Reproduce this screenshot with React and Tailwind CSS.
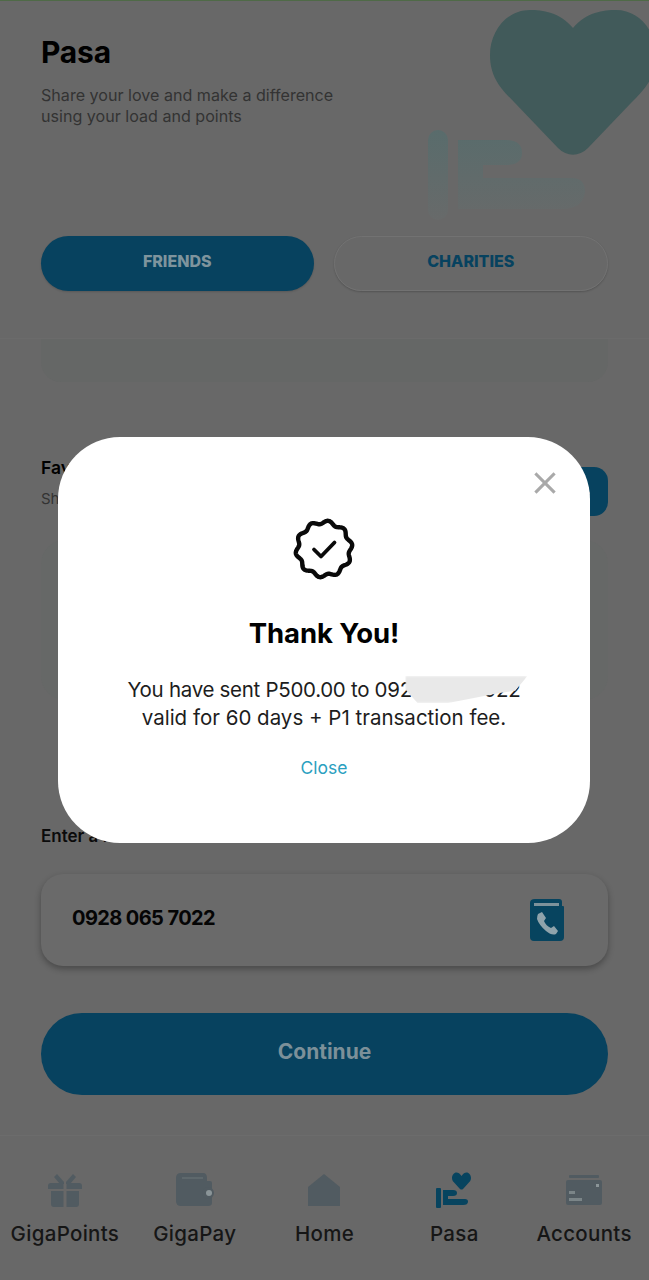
import React from 'react';
import { X } from 'lucide-react';

const font = { fontFamily: 'Inter, "Open Sans", sans-serif' };

// wavy seal outline around a 64x64 box
const sealPath = () => {
  const pts = [];
  for (let i = 0; i < 240; i++) {
    const a = (i / 240) * Math.PI * 2;
    const r = 26.8 + 1.7 * Math.cos(a * 10 + Math.PI / 2);
    pts.push(`${(32 + r * Math.cos(a)).toFixed(2)} ${(32 + r * Math.sin(a)).toFixed(2)}`);
  }
  return `M${pts.join('L')}Z`;
};

const HeaderArt = () => (
  <svg className="absolute left-[410px] top-0" width="239" height="230" viewBox="0 0 239 230">
    <defs>
      <linearGradient id="handFade" x1="0" y1="130" x2="0" y2="222" gradientUnits="userSpaceOnUse">
        <stop offset="0" stopColor="#596c6c" />
        <stop offset="1" stopColor="#686a6a" />
      </linearGradient>
    </defs>
    <path
      fill="#415a5a"
      d="M163 28C150 12 132 10 120 10C96 10 80 32 80 55C80 78 92 90 105 103L148 148C157 157 169 157 178 148L221 103C234 90 246 78 246 55C246 32 230 10 206 10C194 10 176 12 163 28Z"
    />
    <rect x="18" y="130" width="20" height="90" rx="10" fill="url(#handFade)" />
    <path
      fill="url(#handFade)"
      d="M48 140H95Q112 140 112 153Q112 165 96 165H73V178H162Q175 178 175 192Q173 209 152 209H48Z"
    />
  </svg>
);

const Gift = () => (
  <svg width="34" height="34" viewBox="0 0 34 34" fill="#515b61">
    <path d="M9 1L16 9V11H12L6 4ZM25 1L18 9V11H22L28 4Z" />
    <path d="M3 10H15.5V16H0V13Q0 10 3 10ZM18.5 10H31Q34 10 34 13V16H18.5Z" />
    <path d="M3 18H15.5V34H6Q3 34 3 31ZM18.5 18H31V31Q31 34 28 34H18.5Z" />
  </svg>
);

const Wallet = () => (
  <svg width="38" height="34" viewBox="0 0 38 34">
    <path fill="#515b61" d="M5 0H27Q31 0 31 5V8H34Q36 8 36 10V30Q36 33 32 33H5Q0 33 0 28V5Q0 0 5 0Z" />
    <path stroke="#6c7678" strokeWidth="1" d="M6 5H27" />
    <circle cx="32" cy="20" r="6" fill="#515b61" />
    <circle cx="33" cy="20" r="3" fill="#8b9598" />
  </svg>
);

const Home = () => (
  <svg width="32" height="32" viewBox="0 0 32 32" fill="#515b61">
    <path d="M16 0L32 13V32H0V13Z" />
  </svg>
);

const PasaIcon = () => (
  <svg width="36" height="36" viewBox="0 0 36 36" fill="#07445f">
    <path d="M25.5 4C24 1.5 22 0.5 20.5 0.5C18 0.5 16 3 16 6C16 8.5 17.5 10 19 11.5L24 17Q25.5 18 27 17L32 11.5C33.5 10 35 8.5 35 6C35 3 33 0.5 30.5 0.5C29 0.5 27 1.5 25.5 4Z" />
    <rect x="0" y="16" width="5" height="20" rx="1" />
    <path d="M7 18H17Q21 18 21 21Q21 24 17 24H12V27H29Q32 27 32 29.5Q32 33 27 33H7Z" />
  </svg>
);

const Accounts = () => (
  <svg width="36" height="30" viewBox="0 0 36 30">
    <rect x="3" y="0" width="30" height="3" rx="1" fill="#515b61" />
    <rect x="0" y="5" width="36" height="25" rx="2" fill="#515b61" />
    <rect x="30" y="9" width="3" height="3" fill="#8b9598" />
    <rect x="3" y="16" width="6" height="3" fill="#7b8588" />
    <rect x="3" y="23" width="13" height="3" fill="#7b8588" />
  </svg>
);

const ContactIcon = () => (
  <svg width="34" height="42" viewBox="0 0 34 42">
    <path fill="#07445f" d="M5 0H29Q32 0 32 3V7H33Q34 7 34 8V38Q34 42 30 42H4Q0 42 0 38V4Q0 0 5 0Z" />
    <rect x="4" y="4" width="25" height="3" fill="#7d929b" />
    <path
      fill="#8fa3ab"
      d="M8 15L12 13L16 19L14 22Q16 27 21 29L24 27L28 32L26 35Q22 37 16 32Q9 26 7 20Q7 17 8 15Z"
    />
  </svg>
);

const navItems = [
  { label: 'GigaPoints', icon: <Gift /> },
  { label: 'GigaPay', icon: <Wallet /> },
  { label: 'Home', icon: <Home /> },
  { label: 'Pasa', icon: <PasaIcon /> },
  { label: 'Accounts', icon: <Accounts /> },
];

const ThankYouModal = () => (
  <div className="fixed inset-0 flex items-center justify-center pr-px">
    <div className="relative flex h-[406px] w-[532px] flex-col items-center rounded-[62px] bg-white pt-[80px]">
      <X className="absolute right-[28px] top-[29px] size-[34px] text-[#a9a9a9]" strokeWidth={2.2} strokeLinecap="square" />
      <svg width="64" height="64" viewBox="0 0 64 64" fill="none" stroke="#0a0a0a" strokeWidth="4.4" strokeLinejoin="round" strokeLinecap="round">
        <path d={sealPath()} />
        <path d="M22 32.5L29 39.5L42.5 25.5" strokeWidth="3.8" />
      </svg>
      <h2 className="mt-[34px] text-[27.5px] font-bold leading-[36px] tracking-[-0.1px] text-black">Thank You!</h2>
      <div className="relative mt-[25px] text-center text-[20.5px] leading-[28px] text-[#1d1d1d]">
        <p className="whitespace-nowrap tracking-[-0.3px]">You have sent P500.00 to 0928 065 7022</p>
        <p className="whitespace-nowrap">valid for 60 days + P1 transaction fee.</p>
        <div className="absolute right-[-7px] top-0 h-[27px] w-[122px] bg-[#e9e9e9] blur-[1px] [clip-path:polygon(0_0,100%_0,90%_55%,77%_63%,35%_100%,10%_100%,0_50%)]" />
      </div>
      <button className="mt-[24px] text-[17.5px] leading-[24px] text-[#2ba0c0]">Close</button>
    </div>
  </div>
);

export default function App() {
  return (
    <div className="relative h-[1280px] overflow-hidden bg-[#686868]" style={font}>
      <div className="h-px bg-[#4f6a47]" />
      <HeaderArt />

      <div className="relative px-[41px]">
        <div className="h-[235px] pt-[33px]">
          <h1 className="text-[30px] font-bold leading-[36px] tracking-[-0.2px] text-black">Pasa</h1>
          <p className="mt-[15px] text-[16.1px] leading-[21px] text-[#333333]">
            Share your love and make a difference
            <br />
            using your load and points
          </p>
        </div>

        <div className="flex gap-[20px]">
          <button className="h-[55px] flex-1 rounded-full bg-[#07425f] pb-[5px] text-[16px] font-extrabold text-[#7e949d] shadow-[0_1px_2px_rgba(0,0,0,0.15)]">
            FRIENDS
          </button>
          <button className="h-[55px] flex-1 rounded-full border border-[#727272] pb-[5px] text-[16px] font-extrabold text-[#07425f] shadow-[0_1px_2px_rgba(0,0,0,0.2)]">
            CHARITIES
          </button>
        </div>
      </div>

      <div className="mt-[47px] border-t border-[#6b6b6b] px-[41px]">
        <div className="h-[43px] rounded-b-[20px] bg-[#656766]" />
      </div>

      <div className="px-[41px]">
        <div className="mt-[85px] flex h-[49px] items-start justify-between">
          <div className="-mt-[10px]">
            <div className="text-[17.5px] font-semibold leading-[21px] text-black">Favorites</div>
            <div className="mt-[11px] text-[15px] leading-[20px] text-[#333333]">Share with your contacts</div>
          </div>
          <div className="flex h-[49px] w-[70px] items-center justify-end rounded-[14px] bg-[#07425f] pr-[17px]">
            <span className="text-[20px] font-bold leading-none text-[#8fa5ae]">+</span>
          </div>
        </div>

        <div className="mt-[24px] h-[160px] rounded-[24px] bg-[#666867]" />

        <div className="mt-[124px] text-[17px] font-semibold leading-[24px] text-[#0b0b0b]">Enter a mobile number</div>

        <div className="mt-[26px] flex h-[92px] items-center justify-between rounded-[22px] bg-[#6a6a6a] pl-[31px] pr-[44px] shadow-[0_3px_6px_rgba(0,0,0,0.3)]">
          <span className="pb-[4px] text-[20px] font-bold tracking-[-0.6px] text-[#050505]">0928 065 7022</span>
          <ContactIcon />
        </div>

        <button className="mt-[47px] h-[82px] w-full rounded-full bg-[#07425f] pb-[4px] text-[21px] font-bold text-[#7c9099]">
          Continue
        </button>
      </div>

      <nav className="mt-[40px] grid grid-cols-5 border-t border-[#6c6c6c] pt-[36px]">
        {navItems.map(({ label, icon }) => (
          <div key={label} className="flex flex-col items-center">
            <div className="flex h-[36px] items-center">{icon}</div>
            <span className="mt-[12px] whitespace-nowrap text-[20.5px] font-medium leading-[28px] tracking-[0.3px] text-[#161616]">{label}</span>
          </div>
        ))}
      </nav>

      <ThankYouModal />
    </div>
  );
}
